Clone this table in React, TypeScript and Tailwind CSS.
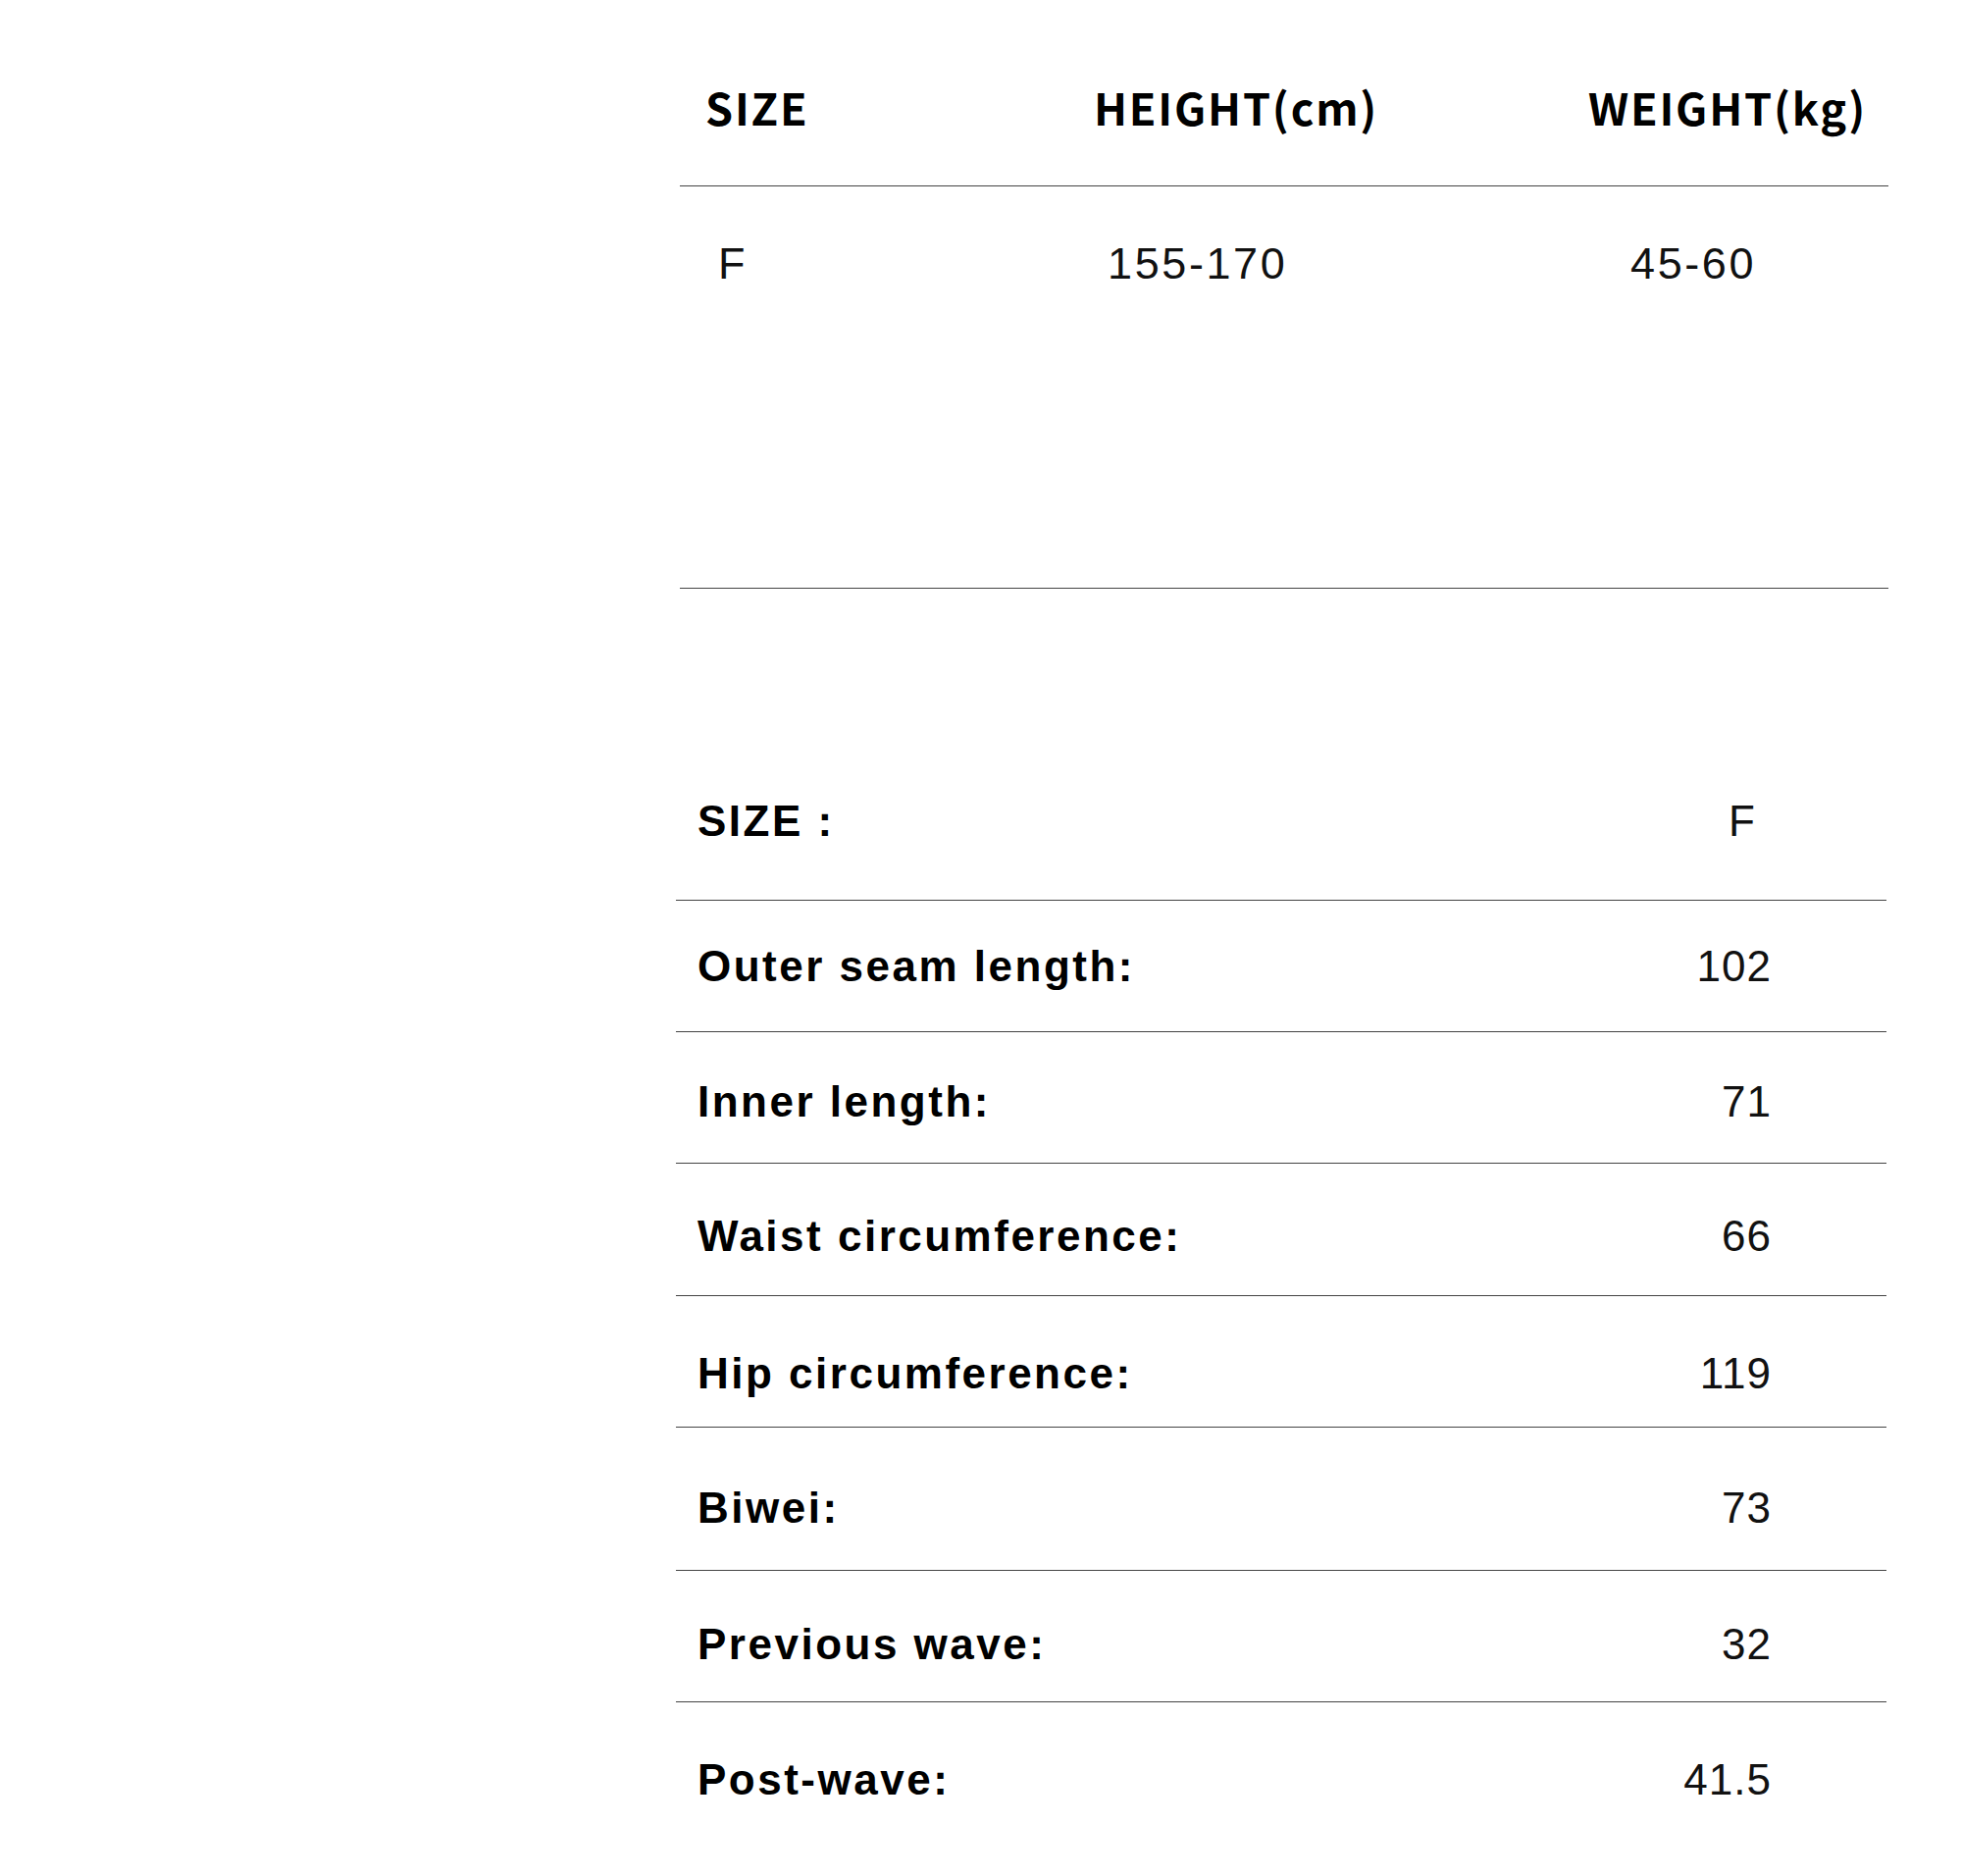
const specs = [
  { label: "Outer seam length:", value: "102", h: "h-[134px]", pt: "pt-[45px]" },
  { label: "Inner length:", value: "71", h: "h-[134px]", pt: "pt-[49px]" },
  { label: "Waist circumference:", value: "66", h: "h-[135px]", pt: "pt-[52px]" },
  { label: "Hip circumference:", value: "119", h: "h-[134px]", pt: "pt-[57px]" },
  { label: "Biwei:", value: "73", h: "h-[146px]", pt: "pt-[60px]" },
  { label: "Previous wave:", value: "32", h: "h-[134px]", pt: "pt-[53px]" },
  { label: "Post-wave:", value: "41.5", h: "h-[177px]", pt: "pt-[57px]" },
]

function SizeTable() {
  return (
    <div className="ml-[693px] w-[1232px] pt-[86px]">
      <div className="grid grid-cols-[396px_504px_1fr] pl-[26px] font-['Noto_Sans_CJK_SC','Noto_Sans',sans-serif] text-[45px] font-bold leading-none tracking-[1.8px] text-black">
        <div>SIZE</div>
        <div>HEIGHT(cm)</div>
        <div>WEIGHT(kg)</div>
      </div>
      <div className="mt-[58px] h-px bg-[#444]" />
      <div className="mt-[56px] grid grid-cols-[396px_504px_1fr] pl-[27px] font-['Liberation_Sans',Arial,sans-serif] text-[45px] leading-none tracking-[2.6px] text-[#111]">
        <div className="pl-[12px]">F</div>
        <div className="pl-[13px]">155-170</div>
        <div className="pl-[42px]">45-60</div>
      </div>
      <div className="mt-[308px] h-px bg-[#444]" />
    </div>
  )
}

function MeasureTable() {
  return (
    <div className="ml-[689px] mt-[215px] w-[1234px] font-['Liberation_Sans',Arial,sans-serif] text-[44px] leading-none">
      <div className="flex h-[102px] justify-between pl-[22px] pr-[134px]">
        <span className="font-bold tracking-[2.5px] text-black">SIZE :</span>
        <span className="text-[#111]">F</span>
      </div>
      {specs.map((row) => (
        <div key={row.label} className={`flex justify-between border-t border-[#444] pl-[22px] pr-[117px] ${row.h} ${row.pt}`}>
          <span className="font-bold tracking-[2.5px] text-black">{row.label}</span>
          <span className="tracking-[1px] text-[#111]">{row.value}</span>
        </div>
      ))}
    </div>
  )
}

export default function App() {
  return (
    <div className="h-[1912px] w-[2000px] overflow-hidden bg-white">
      <SizeTable />
      <MeasureTable />
    </div>
  )
}
